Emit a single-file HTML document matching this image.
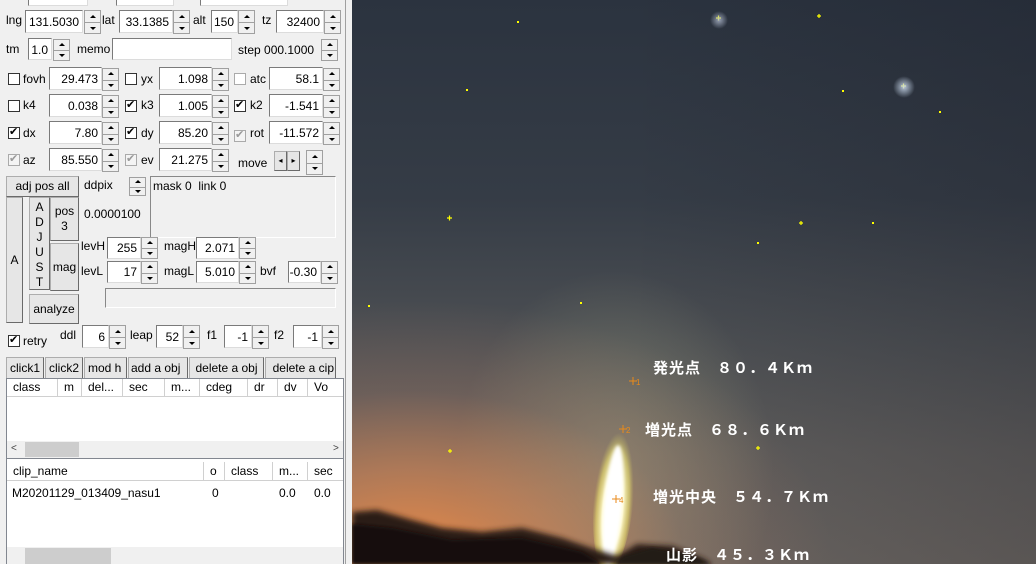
<!DOCTYPE html>
<html><head><meta charset="utf-8"><style>
*{margin:0;padding:0;box-sizing:border-box}
body{width:1036px;height:564px;overflow:hidden;position:relative;background:#f0f0f0;font-family:"Liberation Sans","Noto Sans CJK JP",sans-serif;font-size:12px;color:#000}
div,span{position:absolute}
.l{white-space:nowrap;line-height:14px}
.i{background:#fff;border:1px solid #7a7a7a;border-right-color:#dcdcdc;border-bottom-color:#dcdcdc;text-align:right;padding:2px 3px 0 0;line-height:14px;white-space:nowrap;font-size:12px}
.sp{border:1px solid #a0a0a0;background:#f0f0f0;width:17px}
.sp:before,.sp:after{content:"";position:absolute;left:5px;border-left:3px solid transparent;border-right:3px solid transparent}
.sp:before{top:25%;margin-top:-2px;border-bottom:3px solid #000}
.sp:after{bottom:25%;margin-bottom:-2px;border-top:3px solid #000}
.sp i{position:absolute;left:0;right:0;top:50%;border-top:1px solid #a0a0a0}
.cb{width:12px;height:12px;background:#fff;border:1px solid #333}
.cb.c:after{content:"✔";position:absolute;left:0;top:-3px;font-size:11px}
.cb.g{border-color:#aaa;background:#f4f4f4;color:#999}
.cb.g:after{content:"✔";position:absolute;left:0;top:-3px;font-size:11px;color:#999}
.b{border:1px solid #adadad;border-right-color:#6a6a6a;border-bottom-color:#6a6a6a;background:#e6e6e6;text-align:center;line-height:15px;white-space:nowrap;overflow:hidden}
.h{background:#fff;border-right:1px solid #d0d0d0;border-bottom:1px solid #d0d0d0;height:18px;line-height:17px;padding-left:6px;white-space:nowrap;overflow:hidden}
.t{color:#fff;font-size:15px;letter-spacing:1px;white-space:nowrap;font-weight:bold}
.s{width:2px;height:2px;background:#ff0}
</style></head><body>
<div class="i" style="left:28px;top:-4px;width:60px;height:10px"></div>
<div class="i" style="left:116px;top:-4px;width:58px;height:10px"></div>
<div class="i" style="left:200px;top:-4px;width:88px;height:10px"></div>
<div class="l" style="left:6px;top:13px">lng</div><div class="i" style="left:25px;top:10px;width:58px;height:23px;padding-top:4px">131.5030</div><div class="sp" style="left:84px;top:10px;height:24px"><i></i></div>
<div class="l" style="left:102px;top:13px">lat</div><div class="i" style="left:119px;top:10px;width:54px;height:23px;padding-top:4px">33.1385</div><div class="sp" style="left:173px;top:10px;height:24px"><i></i></div>
<div class="l" style="left:193px;top:13px">alt</div><div class="i" style="left:211px;top:10px;width:27px;height:23px;padding-top:4px">150</div><div class="sp" style="left:238px;top:10px;height:24px"><i></i></div>
<div class="l" style="left:262px;top:13px">tz</div><div class="i" style="left:276px;top:10px;width:48px;height:23px;padding-top:4px">32400</div><div class="sp" style="left:324px;top:10px;height:24px"><i></i></div>
<div class="l" style="left:6px;top:42px">tm</div><div class="i" style="left:28px;top:38px;width:24px;height:22px;padding-top:4px">1.0</div><div class="sp" style="left:53px;top:39px;height:22px"><i></i></div>
<div class="l" style="left:77px;top:42px">memo</div><div class="i" style="left:112px;top:38px;width:120px;height:22px"></div>
<div class="l" style="left:238px;top:43px">step 000.1000</div><div class="sp" style="left:321px;top:39px;height:22px"><i></i></div>
<div class="cb" style="left:8px;top:73px"></div><div class="l" style="left:23px;top:72px">fovh</div><div class="i" style="left:49px;top:67px;width:53px;height:23px;padding-top:4px">29.473</div><div class="sp" style="left:102px;top:68px;height:23px"><i></i></div>
<div class="cb" style="left:125px;top:73px"></div><div class="l" style="left:141px;top:72px">yx</div><div class="i" style="left:159px;top:67px;width:53px;height:23px;padding-top:4px">1.098</div><div class="sp" style="left:212px;top:68px;height:23px"><i></i></div>
<div class="cb" style="left:234px;top:73px;border-color:#aaa"></div><div class="l" style="left:250px;top:72px">atc</div><div class="i" style="left:269px;top:67px;width:54px;height:23px;padding-top:4px">58.1</div><div class="sp" style="left:323px;top:68px;height:23px"><i></i></div>
<div class="cb" style="left:8px;top:100px"></div><div class="l" style="left:23px;top:98px">k4</div><div class="i" style="left:49px;top:94px;width:53px;height:23px;padding-top:4px">0.038</div><div class="sp" style="left:102px;top:95px;height:23px"><i></i></div>
<div class="cb c" style="left:125px;top:100px"></div><div class="l" style="left:141px;top:98px">k3</div><div class="i" style="left:159px;top:94px;width:53px;height:23px;padding-top:4px">1.005</div><div class="sp" style="left:212px;top:95px;height:23px"><i></i></div>
<div class="cb c" style="left:234px;top:100px"></div><div class="l" style="left:250px;top:98px">k2</div><div class="i" style="left:269px;top:94px;width:54px;height:23px;padding-top:4px">-1.541</div><div class="sp" style="left:323px;top:95px;height:23px"><i></i></div>
<div class="cb c" style="left:8px;top:127px"></div><div class="l" style="left:23px;top:126px">dx</div><div class="i" style="left:49px;top:121px;width:53px;height:23px;padding-top:4px">7.80</div><div class="sp" style="left:102px;top:122px;height:23px"><i></i></div>
<div class="cb c" style="left:125px;top:127px"></div><div class="l" style="left:141px;top:126px">dy</div><div class="i" style="left:159px;top:121px;width:53px;height:23px;padding-top:4px">85.20</div><div class="sp" style="left:212px;top:122px;height:23px"><i></i></div>
<div class="cb g" style="left:234px;top:130px"></div><div class="l" style="left:250px;top:126px">rot</div><div class="i" style="left:269px;top:121px;width:54px;height:23px;padding-top:4px">-11.572</div><div class="sp" style="left:323px;top:122px;height:23px"><i></i></div>
<div class="cb g" style="left:8px;top:154px"></div><div class="l" style="left:23px;top:153px">az</div><div class="i" style="left:49px;top:148px;width:53px;height:23px;padding-top:4px">85.550</div><div class="sp" style="left:102px;top:149px;height:23px"><i></i></div>
<div class="cb g" style="left:125px;top:154px"></div><div class="l" style="left:141px;top:153px">ev</div><div class="i" style="left:159px;top:148px;width:53px;height:23px;padding-top:4px">21.275</div><div class="sp" style="left:212px;top:149px;height:23px"><i></i></div>
<div class="l" style="left:238px;top:156px">move</div>
<div class="b" style="left:274px;top:151px;width:13px;height:20px;line-height:17px;font-size:8px">◂</div><div class="b" style="left:287px;top:151px;width:13px;height:20px;line-height:17px;font-size:8px">▸</div>
<div class="sp" style="left:306px;top:150px;height:25px"><i></i></div>
<div class="b" style="left:6px;top:176px;width:73px;height:21px;line-height:18px">adj pos all</div>
<div class="l" style="left:84px;top:178px">ddpix</div>
<div class="sp" style="left:129px;top:177px;height:19px"><i></i></div>
<div style="left:150px;top:176px;width:186px;height:62px;border-left:1px solid #888;border-top:1px solid #888;border-right:1px solid #fff;border-bottom:1px solid #fff"></div>
<div class="l" style="left:153px;top:179px">mask 0&nbsp;&nbsp;link 0</div>
<div class="l" style="left:84px;top:207px">0.0000100</div>
<div class="b" style="left:6px;top:197px;width:17px;height:126px;line-height:124px">A</div>
<div class="b" style="left:29px;top:197px;width:21px;height:93px;line-height:15px;padding-top:2px">A<br>D<br>J<br>U<br>S<br>T</div>
<div class="b" style="left:50px;top:197px;width:29px;height:44px;line-height:15px;padding-top:6px">pos<br>3</div>
<div class="b" style="left:50px;top:243px;width:29px;height:48px;line-height:46px">mag</div>
<div class="b" style="left:29px;top:294px;width:50px;height:30px;line-height:28px">analyze</div>
<div class="l" style="left:81px;top:239px">levH</div><div class="i" style="left:107px;top:237px;width:34px;height:22px;padding-top:3px">255</div><div class="sp" style="left:141px;top:237px;height:22px"><i></i></div>
<div class="l" style="left:164px;top:239px">magH</div><div class="i" style="left:196px;top:237px;width:43px;height:22px;padding-top:3px">2.071</div><div class="sp" style="left:239px;top:237px;height:22px"><i></i></div>
<div class="l" style="left:81px;top:264px">levL</div><div class="i" style="left:107px;top:261px;width:34px;height:22px;padding-top:3px">17</div><div class="sp" style="left:141px;top:261px;height:23px"><i></i></div>
<div class="l" style="left:164px;top:264px">magL</div><div class="i" style="left:196px;top:261px;width:43px;height:22px;padding-top:3px">5.010</div><div class="sp" style="left:239px;top:261px;height:23px"><i></i></div>
<div class="l" style="left:260px;top:264px">bvf</div><div class="i" style="left:288px;top:261px;width:33px;height:22px;padding-top:3px">-0.30</div><div class="sp" style="left:321px;top:261px;height:23px"><i></i></div>
<div style="left:105px;top:288px;width:231px;height:20px;border-left:1px solid #888;border-top:1px solid #888;border-right:1px solid #fff;border-bottom:1px solid #fff"></div>
<div class="cb c" style="left:8px;top:335px"></div><div class="l" style="left:23px;top:334px">retry</div>
<div class="l" style="left:60px;top:328px">ddl</div><div class="i" style="left:82px;top:325px;width:27px;height:23px;padding-top:4px">6</div><div class="sp" style="left:109px;top:325px;height:24px"><i></i></div>
<div class="l" style="left:130px;top:328px">leap</div><div class="i" style="left:156px;top:325px;width:27px;height:23px;padding-top:4px">52</div><div class="sp" style="left:183px;top:325px;height:24px"><i></i></div>
<div class="l" style="left:207px;top:328px">f1</div><div class="i" style="left:224px;top:325px;width:28px;height:23px;padding-top:4px">-1</div><div class="sp" style="left:252px;top:325px;height:24px"><i></i></div>
<div class="l" style="left:274px;top:328px">f2</div><div class="i" style="left:293px;top:325px;width:29px;height:23px;padding-top:4px">-1</div><div class="sp" style="left:322px;top:325px;height:24px"><i></i></div>
<div class="b" style="left:6px;top:357px;width:38px;height:22px;line-height:20px">click1</div>
<div class="b" style="left:45px;top:357px;width:38px;height:22px;line-height:20px">click2</div>
<div class="b" style="left:84px;top:357px;width:43px;height:22px;line-height:20px;text-align:left;padding-left:3px">mod h</div>
<div class="b" style="left:128px;top:357px;width:60px;height:22px;line-height:20px;text-align:left;padding-left:2px">add a obj</div>
<div class="b" style="left:189px;top:357px;width:75px;height:22px;line-height:20px">delete a obj</div>
<div class="b" style="left:265px;top:357px;width:71px;height:22px;line-height:20px;text-align:right;padding-right:1px">delete a cip</div>
<div style="left:6px;top:378px;width:338px;height:81px;background:#fff;border:1px solid #828790;overflow:hidden">
<div class="h" style="left:0;top:0;width:51px">class</div><div class="h" style="left:51px;top:0;width:24px">m</div><div class="h" style="left:75px;top:0;width:41px">del...</div><div class="h" style="left:116px;top:0;width:42px">sec</div><div class="h" style="left:158px;top:0;width:35px">m...</div><div class="h" style="left:193px;top:0;width:48px">cdeg</div><div class="h" style="left:241px;top:0;width:30px">dr</div><div class="h" style="left:271px;top:0;width:30px">dv</div><div class="h" style="left:301px;top:0;width:36px">Vo</div>
<div style="left:0;top:62px;width:336px;height:17px;background:#f0f0f0"></div>
<div style="left:18px;top:63px;width:54px;height:15px;background:#cdcdcd"></div>
<div class="l" style="left:4px;top:63px;font-size:10px;color:#444">&lt;</div><div class="l" style="left:326px;top:63px;font-size:10px;color:#444">&gt;</div>
</div>
<div style="left:6px;top:458px;width:338px;height:106px;background:#fff;border:1px solid #828790;border-bottom:none;overflow:hidden">
<div class="h" style="left:0;top:3px;width:197px;height:19px;line-height:19px">clip_name</div><div class="h" style="left:197px;top:3px;width:21px;height:19px;line-height:19px">o</div><div class="h" style="left:218px;top:3px;width:48px;height:19px;line-height:19px">class</div><div class="h" style="left:266px;top:3px;width:35px;height:19px;line-height:19px">m...</div><div class="h" style="left:301px;top:3px;width:36px;height:19px;line-height:19px">sec</div>
<div class="l" style="left:5px;top:27px">M20201129_013409_nasu1</div><div class="l" style="left:205px;top:27px">0</div><div class="l" style="left:272px;top:27px">0.0</div><div class="l" style="left:307px;top:27px">0.0</div>
<div style="left:0;top:88px;width:336px;height:20px;background:#f0f0f0"></div>
<div style="left:18px;top:89px;width:86px;height:18px;background:#cdcdcd"></div>
</div>
<div style="left:345px;top:0;width:1px;height:564px;background:#a0a0a0"></div>
<div style="left:352px;top:0;width:684px;height:564px;overflow:hidden;background:
radial-gradient(ellipse 420px 260px at 60px 560px,rgba(240,140,70,0.95) 0%,rgba(215,135,85,0.65) 35%,rgba(160,115,95,0.3) 65%,rgba(120,100,90,0) 100%),
radial-gradient(ellipse 160px 200px at 262px 470px,rgba(200,200,150,0.35),rgba(200,200,150,0) 100%),
linear-gradient(90deg,rgba(0,0,0,0) 40%,rgba(15,15,25,0.18) 100%),
linear-gradient(180deg,#2b333f 0%,#353c46 35%,#4c4f53 60%,#5f5d5c 80%,#6a6561 100%)">
<svg width="684" height="564" style="position:absolute;left:0;top:0">
<defs><radialGradient id="m" cx="50%" cy="60%" r="50%"><stop offset="0" stop-color="#ffffff"/><stop offset="0.5" stop-color="#fffad0"/><stop offset="0.8" stop-color="#e8e070" stop-opacity="0.6"/><stop offset="1" stop-color="#c8c060" stop-opacity="0"/></radialGradient>
<filter id="bl"><feGaussianBlur stdDeviation="3"/></filter><filter id="bl2"><feGaussianBlur stdDeviation="1.5"/></filter></defs>
<ellipse cx="262" cy="495" rx="20" ry="78" fill="url(#m)" transform="rotate(5 262 495)"/>
<ellipse cx="261" cy="505" rx="9" ry="60" fill="#ffffff" filter="url(#bl2)" transform="rotate(5 261 505)"/>
<path d="M0 512 L25 510 L60 520 L90 528 L130 532 L170 528 L210 538 L245 550 L265 556 L285 544 L320 546 L350 558 L360 564 L0 564 Z" fill="#2a1e16" filter="url(#bl)"/>
<path d="M0 524 L40 528 L100 540 L170 538 L230 552 L250 564 L0 564Z" fill="#150f0c" filter="url(#bl2)"/>
<path d="M272 556 L300 548 L330 553 L360 564 L262 564Z" fill="#201a14" filter="url(#bl2)"/>
<g stroke="#e88a1a" stroke-width="1" fill="none"><path d="M277 381h8M281 377v8M267 429h8M271 425v8M260 499h8M264 495v8"/></g>
<text x="284" y="385" fill="#e88a1a" font-size="8">1</text><text x="274" y="433" fill="#e88a1a" font-size="8">2</text><text x="267" y="503" fill="#e88a1a" font-size="8">4</text>
<g stroke="#ff0" stroke-width="1.2"><path d="M364 18h5M366.5 15.5v5M465 16h4M467 14v4M549 86h5M551.5 83.5v5M95 218h5M97.5 215.5v5M447 223h4M449 221v4M96 451h4M98 449v4M404 448h4M406 446v4"/></g>
</svg>
<div style="left:358px;top:11px;width:18px;height:18px;border-radius:50%;background:radial-gradient(rgba(180,190,210,0.8) 0%,rgba(120,130,150,0) 70%)"></div>
<div style="left:541px;top:76px;width:22px;height:22px;border-radius:50%;background:radial-gradient(rgba(200,215,235,0.9) 0%,rgba(120,140,170,0) 70%)"></div>
<div class="s" style="left:228px;top:302px"></div>
<div class="s" style="left:165px;top:21px"></div>
<div class="s" style="left:520px;top:222px"></div>
<div class="s" style="left:587px;top:111px"></div>
<div class="s" style="left:490px;top:90px"></div>
<div class="s" style="left:16px;top:305px"></div>
<div class="s" style="left:114px;top:89px"></div>
<div class="s" style="left:405px;top:242px"></div>
<div class="t" style="left:301px;top:357px">発光点　８０．４Ｋｍ</div>
<div class="t" style="left:293px;top:419px">増光点　６８．６Ｋｍ</div>
<div class="t" style="left:301px;top:486px">増光中央　５４．７Ｋｍ</div>
<div class="t" style="left:314px;top:544px">山影　４５．３Ｋｍ</div>
</div>
</body></html>
